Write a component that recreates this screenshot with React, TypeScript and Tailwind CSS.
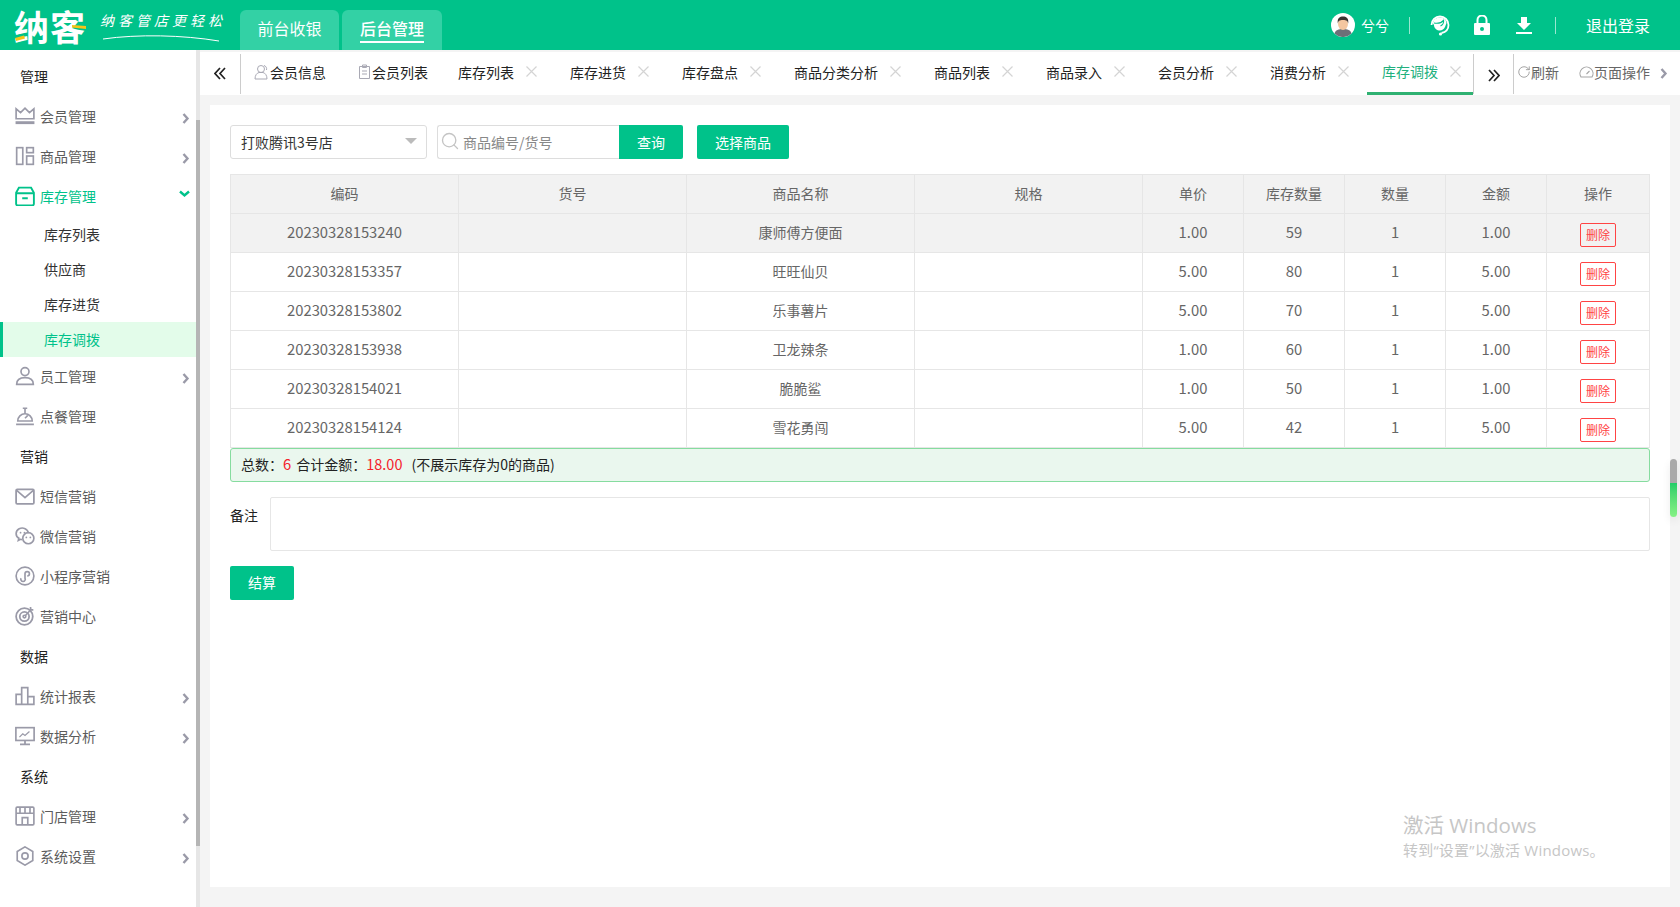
import { RotateCw, Search } from 'lucide-react';
import type { ReactNode } from 'react';

const GREEN = 'text-[#00c28a]';

function Ico({ children, className = 'text-[#9a9aa8]' }: { children: ReactNode; className?: string }) {
  return (
    <svg viewBox="0 0 18 18" fill="none" stroke="currentColor" strokeWidth="1.500" className={`w-5 h-5 shrink-0 ${className}`}>
      {children}
    </svg>
  );
}

function ArrowRight() {
  return (
    <svg viewBox="0 0 8 11" fill="none" stroke="#9a9aa8" strokeWidth="2.400" className="w-2 h-[11px] shrink-0">
      <path d="M1.500 1l4 4.500-4 4.500" />
    </svg>
  );
}

function DoubleArrow({ flip = false }: { flip?: boolean }) {
  return (
    <svg viewBox="0 0 12 13" fill="none" stroke="#222" strokeWidth="1.700" className={`w-3 h-[13px] ${flip ? 'rotate-180' : ''}`}>
      <path d="M6 1L1 6.500 6 12M11 1L6 6.500 11 12" />
    </svg>
  );
}

const icons: Record<string, ReactNode> = {
  crown: (
    <>
      <path d="M1 11.500V2.500l4 3.500 4-4 4 4 4-3.500v9z" />
      <path d="M0.500 15h17" strokeWidth="2.600" />
    </>
  ),
  goods: (
    <>
      <rect x="1.500" y="1.500" width="5.500" height="15" />
      <rect x="10.500" y="1.500" width="6" height="4.500" />
      <rect x="10.500" y="9" width="6" height="7.500" />
    </>
  ),
  box: (
    <>
      <path d="M3.500 1.500h11l2.500 4.500v10a1.500 1.500 0 0 1-1.500 1.500h-13A1.500 1.500 0 0 1 1 16V6z" strokeWidth="1.700" />
      <path d="M1 6.500h16M6.500 11h5" strokeWidth="1.700" />
    </>
  ),
  user: (
    <>
      <circle cx="9" cy="5" r="3.600" />
      <path d="M1.500 16.500c0-4 3.200-6 7.500-6s7.500 2 7.500 6z" />
    </>
  ),
  bell: (
    <>
      <path d="M2.500 13.500a6.500 6.500 0 0 1 13 0z" />
      <path d="M1 16.500h16M7 2h4M9 2v5M9 11l2.500-2.500" />
    </>
  ),
  mail: (
    <>
      <rect x="1" y="3" width="16" height="13" rx="1" strokeWidth="1.600" />
      <path d="M1.500 4l7.500 6.500L16.500 4" />
    </>
  ),
  wechat: (
    <>
      <path d="M12 6.500A5.500 5 0 1 0 3.500 11l-.5 2 2-1c.5.200 1 .3 1.500.300" />
      <circle cx="12" cy="11" r="5" />
      <path d="M10.200 10.300h.01M13.800 10.300h.01M5 6h.01M8.500 6h.01" strokeWidth="1.600" strokeLinecap="round" />
    </>
  ),
  mini: (
    <>
      <circle cx="9" cy="9" r="8" />
      <path d="M5.500 11a2 2 0 1 0 3.500 0V7a2 2 0 1 1 2 2" />
    </>
  ),
  target: (
    <>
      <circle cx="8.500" cy="9.500" r="7.500" strokeWidth="1.600" />
      <circle cx="8.500" cy="9.500" r="4.200" strokeWidth="1.600" />
      <circle cx="8.500" cy="9.500" r="1.200" />
      <path d="M9 9l6-6.500M14 1v2.500h2.500" />
    </>
  ),
  bars: <path d="M1 16.500V7.500h5v9zM6 16.500V1.500h5.500v15zM11.500 16.500V9.500H17v7z" />,
  monitor: (
    <>
      <rect x="0.800" y="1.500" width="16.400" height="11.500" />
      <path d="M9 13v3.500M4.500 16.500h9" strokeWidth="1.600" />
      <path d="M4 10l3-3 2 1.500 4-3.500" strokeWidth="1.100" />
    </>
  ),
  store: (
    <>
      <path d="M2 1h14a1 1 0 0 1 1 1v14a1 1 0 0 1-1 1H2a1 1 0 0 1-1-1V2a1 1 0 0 1 1-1z" />
      <path d="M1 6.500h16M4.500 1v5.500M9 1v5.500M13.500 1v5.500M6.500 17v-6.500h5V17" />
    </>
  ),
  gear: (
    <>
      <path d="M9 0.800l7 4.100v8.200l-7 4.100-7-4.100V4.900z" />
      <circle cx="9" cy="9" r="2.800" />
    </>
  ),
};

type NavEntry =
  | { kind: 'head'; label: string }
  | { kind: 'item'; label: string; icon: string; arrow?: boolean; open?: boolean }
  | { kind: 'sub'; label: string; active?: boolean };

const nav: NavEntry[] = [
  { kind: 'head', label: '管理' },
  { kind: 'item', label: '会员管理', icon: 'crown', arrow: true },
  { kind: 'item', label: '商品管理', icon: 'goods', arrow: true },
  { kind: 'item', label: '库存管理', icon: 'box', arrow: true, open: true },
  { kind: 'sub', label: '库存列表' },
  { kind: 'sub', label: '供应商' },
  { kind: 'sub', label: '库存进货' },
  { kind: 'sub', label: '库存调拨', active: true },
  { kind: 'item', label: '员工管理', icon: 'user', arrow: true },
  { kind: 'item', label: '点餐管理', icon: 'bell' },
  { kind: 'head', label: '营销' },
  { kind: 'item', label: '短信营销', icon: 'mail' },
  { kind: 'item', label: '微信营销', icon: 'wechat' },
  { kind: 'item', label: '小程序营销', icon: 'mini' },
  { kind: 'item', label: '营销中心', icon: 'target' },
  { kind: 'head', label: '数据' },
  { kind: 'item', label: '统计报表', icon: 'bars', arrow: true },
  { kind: 'item', label: '数据分析', icon: 'monitor', arrow: true },
  { kind: 'head', label: '系统' },
  { kind: 'item', label: '门店管理', icon: 'store', arrow: true },
  { kind: 'item', label: '系统设置', icon: 'gear', arrow: true },
];

const tabs = ['库存列表', '库存进货', '库存盘点', '商品分类分析', '商品列表', '商品录入', '会员分析', '消费分析'];

const rows = [
  ['20230328153240', '康师傅方便面', '1.00', '59', '1', '1.00'],
  ['20230328153357', '旺旺仙贝', '5.00', '80', '1', '5.00'],
  ['20230328153802', '乐事薯片', '5.00', '70', '1', '5.00'],
  ['20230328153938', '卫龙辣条', '1.00', '60', '1', '1.00'],
  ['20230328154021', '脆脆鲨', '1.00', '50', '1', '1.00'],
  ['20230328154124', '雪花勇闯', '5.00', '42', '1', '5.00'],
];

function CloseX() {
  return (
    <svg viewBox="0 0 11 11" stroke="#d4d4d4" strokeWidth="1.200" className="w-[11px] h-[11px] ml-3 shrink-0">
      <path d="M0.500 0.500l10 10M10.500 0.500l-10 10" />
    </svg>
  );
}

function Sidebar() {
  return (
    <aside className="w-[200px] flex shrink-0">
      <div className="w-[196px] bg-white pt-[7px] text-sm">
        {nav.map((n) => {
          if (n.kind === 'head') {
            return (
              <div key={n.label} className="h-10 pl-5 pb-0.5 flex items-center text-[#222]">
                {n.label}
              </div>
            );
          }
          if (n.kind === 'sub') {
            return (
              <div
                key={n.label}
                className={
                  n.active
                    ? 'h-[35px] pl-[41px] pb-0.5 flex items-center bg-[#e3fcea] border-l-[3px] border-[#00c28a] text-[#00c28a]'
                    : 'h-[35px] pl-11 pb-0.5 flex items-center text-[#333]'
                }
              >
                {n.label}
              </div>
            );
          }
          return (
            <div key={n.label} className={`h-10 pl-[15px] pr-[6px] pb-0.5 flex items-center ${n.open ? GREEN : 'text-[#5c5c5c]'}`}>
              <Ico className={n.open ? GREEN : 'text-[#9a9aa8]'}>{icons[n.icon]}</Ico>
              <span className="ml-[5px] flex-1">{n.label}</span>
              {n.open ? (
                <svg viewBox="0 0 11 8" fill="none" stroke="#00c28a" strokeWidth="2.400" className="w-[11px] h-2 -mt-1 -ml-[3px]">
                  <path d="M1 1.500l4.500 4 4.500-4" />
                </svg>
              ) : n.arrow ? (
                <span className="mt-1">
                  <ArrowRight />
                </span>
              ) : null}
            </div>
          );
        })}
      </div>
      <div className="w-1 flex flex-col bg-[#e6e6e6]">
        <div className="h-[70px]" />
        <div className="h-[726px] bg-[#b5b5b5]" />
      </div>
    </aside>
  );
}

function TabBar() {
  return (
    <div className="h-[43px] mt-0.5 bg-white flex items-center text-sm text-[#222]">
      <div className="w-[41px] h-10 border-r border-[#ccc] flex items-center justify-center pr-px">
        <DoubleArrow />
      </div>
      <div className="h-full flex items-center ml-[3px] pl-2.5 pr-[15px] mr-1.5 pb-1">
        <svg viewBox="0 0 16 16" fill="none" stroke="#a9a9b4" strokeWidth="1" className="w-4 h-4 shrink-0">
          <circle cx="7" cy="5" r="3.500" />
          <path d="M1 15c0-4 2-6 4-6.500h4c2 .5 4 2.500 4 6.500zM10 1.500c2 .5 3 2.500 2.500 4.500" />
        </svg>
        会员信息
      </div>
      <div className="h-full flex items-center pl-2.5 pr-[9px] mr-1.5 pb-1">
        <svg viewBox="0 0 15 16" fill="none" stroke="#a9a9b4" strokeWidth="1" className="w-[15px] h-4 shrink-0">
          <path d="M2.500 2.500h10v12h-10zM5.500 1h4v2.500h-4zM5 7h5M5 10h5" />
        </svg>
        会员列表
      </div>
      {tabs.map((t) => (
        <div key={t} className="h-full flex items-center pl-[15px] pr-3 mr-1.5 pb-1">
          {t}
          <CloseX />
        </div>
      ))}
      <div className="h-full flex items-center pl-[15px] pr-3 pb-0.5 text-[#22b07d] border-b-[3px] border-[#2fb172]">
        库存调拨
        <CloseX />
      </div>
      <div className="w-[41px] h-10 border-x border-[#ccc] flex items-center justify-center">
        <div className="mt-1">
          <DoubleArrow flip />
        </div>
      </div>
      <div className="flex items-center text-[#666] ml-[3px] pb-1">
        <RotateCw size={14} strokeWidth={1.300} className="text-[#888]" />
        <span>刷新</span>
        <svg viewBox="0 0 15 15" fill="none" stroke="#a5a5a5" strokeWidth="1.100" className="w-[15px] h-[15px] ml-5">
          <path d="M2 13h11a6.500 6.500 0 1 0-11 0zM7.500 10l3-3" />
        </svg>
        <span>页面操作</span>
        <span className="ml-2.5 mt-1">
          <ArrowRight />
        </span>
      </div>
    </div>
  );
}

function Toolbar() {
  return (
    <div className="flex h-[34px] text-sm">
      <div className="w-[197px] border border-[#ddd] rounded-[3px] pl-2.5 pr-[9px] flex items-center justify-between text-[#333]">
        打败腾讯3号店
        <span className="w-0 h-0 border-x-[6px] border-t-[6px] border-x-transparent border-t-[#bbb] -mt-0.5" />
      </div>
      <div className="ml-2.5 w-[182px] border border-[#ddd] border-r-0 rounded-l-[3px] pl-[2px] flex items-center text-[#888]">
        <Search size={20} strokeWidth={1.600} className="text-[#c4c4c4] mr-[3px] -mt-0.5" />
        商品编号/货号
      </div>
      <button className="w-16 bg-[#00c28a] text-white rounded-r-[2px]">查询</button>
      <button className="ml-3.5 w-[92px] bg-[#00c28a] text-white rounded-[2px]">选择商品</button>
    </div>
  );
}

function GoodsTable() {
  const heads = ['编码', '货号', '商品名称', '规格', '单价', '库存数量', '数量', '金额', '操作'];
  const widths = ['w-[228px]', 'w-[228px]', 'w-[228px]', 'w-[228px]', 'w-[101px]', 'w-[101px]', 'w-[101px]', 'w-[101px]', ''];
  return (
    <table className="w-full table-fixed border-collapse mt-[15px] text-sm text-[#666]">
      <colgroup>
        {widths.map((w, i) => (
          <col key={i} className={w} />
        ))}
      </colgroup>
      <thead>
        <tr className="bg-[#f2f2f2]">
          {heads.map((h) => (
            <th key={h} className="h-[39px] pb-0.5 font-normal border border-[#e6e6e6]">
              {h}
            </th>
          ))}
        </tr>
      </thead>
      <tbody>
        {rows.map((r, i) => (
          <tr key={r[0]} className={i === 0 ? 'bg-[#f2f2f2]' : ''}>
            <td className="h-[39px] pb-0.5 border border-[#e6e6e6] text-center text-[14.800px]">{r[0]}</td>
            <td className="border border-[#e6e6e6]" />
            <td className="pb-0.5 border border-[#e6e6e6] text-center">{r[1]}</td>
            <td className="border border-[#e6e6e6]" />
            <td className="pb-0.5 border border-[#e6e6e6] text-center text-[14.800px]">{r[2]}</td>
            <td className="pb-0.5 border border-[#e6e6e6] text-center text-[14.800px]">{r[3]}</td>
            <td className="pb-0.5 border border-[#e6e6e6] text-center text-[14.800px]">{r[4]}</td>
            <td className="pb-0.5 border border-[#e6e6e6] text-center text-[14.800px]">{r[5]}</td>
            <td className="border border-[#e6e6e6] text-center">
              <button className="w-9 h-6 mt-[3px] border border-[#f44] rounded-[2px] text-xs text-[#f44] leading-none align-middle">删除</button>
            </td>
          </tr>
        ))}
      </tbody>
    </table>
  );
}

export default function App() {
  return (
    <div className="w-[1680px] h-[907px] relative overflow-hidden bg-[#f4f4f4] font-['Noto_Sans_CJK_SC','Liberation_Sans',sans-serif]">
      <header className="h-[50px] bg-[#00c28a] flex text-white">
        <div className="w-[240px] relative">
          <span className="absolute left-[14px] top-[6px] text-[35px] leading-[40px] font-bold tracking-[1px]">纳客</span>
          <svg viewBox="0 0 72 28" className="absolute left-[15px] top-[13px] w-[72px] h-[28px]" fill="#f5c518">
            <path d="M0 25l9-2.500 1 3-9 2.500zM57 12l14 1v3l-14-1.500z" />
          </svg>
          <span className="absolute left-[100px] top-[10px] text-sm leading-5 italic tracking-[4px] whitespace-nowrap">纳客管店更轻松</span>
          <svg viewBox="0 0 116 8" fill="none" stroke="#fff" className="absolute left-[103px] top-[34px] w-[116px] h-2">
            <path d="M0 5C35 0 80 1 116 7" strokeWidth="1" />
          </svg>
        </div>
        <div className="flex items-end gap-[3px]">
          <div className="w-[99px] h-10 rounded-t-md bg-[#33d1a5] flex items-center justify-center text-base pb-1">前台收银</div>
          <div className="w-[100px] h-10 rounded-t-md bg-[#33d1a5] flex items-center justify-center text-base pb-0.5">
            <span className="border-b-2 border-white leading-[26px] font-medium">后台管理</span>
          </div>
        </div>
        <div className="ml-auto flex items-center pr-[30px]">
          <svg viewBox="0 0 24 24" className="w-6 h-6">
            <circle cx="12" cy="12" r="12" fill="#fff" />
            <path d="M3.500 20.500c1-3.500 4-4.500 8.500-4.500s7.500 1 8.500 4.500A12 12 0 0 1 3.500 20.500z" fill="#6c7078" />
            <ellipse cx="12" cy="11" rx="5" ry="6" fill="#f4c6a0" />
            <path d="M6.800 10.500C6 5 9 3.500 12 3.500s6 1.500 5.200 7c-.5-2.500-1.500-3.500-5.200-3.500s-4.700 1-5.200 3.500z" fill="#3a3330" />
          </svg>
          <span className="ml-1.5 text-sm">兮兮</span>
          <span className="ml-5 w-px h-[17px] bg-white/60" />
          <svg viewBox="0 0 20 22" fill="none" stroke="#fff" className="ml-5 w-5 h-[22px]">
            <path d="M1.500 11a8.500 8.500 0 0 1 17 0c0 4-2.500 7-7 8" strokeWidth="1.800" />
            <path d="M3 9.500C3 6 6 3.500 10 3.500s6.500 2.500 6.500 5.500L15 13c-1 2-3 3.500-5 3.500-3 0-6-2-6-5.500z" fill="#fff" stroke="none" />
            <path d="M4 9c3 .5 7 .5 9.500-2.500.5 2-1 4.500-3 5.500" stroke="#00c28a" strokeWidth="1.200" />
            <circle cx="10.500" cy="20" r="1.600" fill="#fff" stroke="none" />
          </svg>
          <svg viewBox="0 0 16 20" className="ml-6 w-4 h-5">
            <path d="M3.500 9V5a4.500 4.500 0 0 1 9 0v4" fill="none" stroke="#fff" strokeWidth="2" />
            <path d="M1 8h14a1 1 0 0 1 1 1v10a1 1 0 0 1-1 1H1a1 1 0 0 1-1-1V9a1 1 0 0 1 1-1z" fill="#fff" />
            <circle cx="8" cy="14" r="2" fill="#00c28a" />
          </svg>
          <svg viewBox="0 0 16 17" className="ml-[26px] w-4 h-[17px]" fill="#fff">
            <path d="M5 0h6v6h4L8 13 1 6h4zM0 15h16v2H0z" />
          </svg>
          <span className="ml-[23px] w-px h-[17px] bg-white/60" />
          <span className="ml-[30px] text-base">退出登录</span>
        </div>
      </header>

      <div className="flex h-[857px]">
        <Sidebar />
        <main className="flex-1 min-w-0">
          <TabBar />
          <section className="mt-2.5 ml-2.5 mr-2.5 h-[782px] bg-white px-5 pt-5">
            <Toolbar />
            <GoodsTable />
            <div className="h-[34px] flex items-center border border-[#86dc9f] rounded-[3px] bg-[#eaf7ee] pl-2.5 pb-0.5 text-sm text-[#222]">
              总数：<span className="text-[#f5222d] text-[14.800px]">6</span>
              <span className="ml-[5px]">合计金额：</span>
              <span className="text-[#f5222d] text-[14.500px]">18.00</span>
              <span className="ml-[9px]">(不展示库存为0的商品)</span>
            </div>
            <div className="flex mt-[15px]">
              <label className="w-10 pt-[8px] text-sm text-[#222]">备注</label>
              <textarea className="flex-1 h-[54px] border border-[#e6e6e6] rounded-[2px] resize-none" />
            </div>
            <button className="mt-[15px] w-16 h-[34px] pb-0.5 bg-[#00c28a] text-white text-sm rounded-[2px]">结算</button>
          </section>
        </main>
      </div>

      <div className="absolute left-[1670px] top-[459px] w-[7px] h-[58px] rounded-full overflow-hidden flex flex-col shadow-[0_4px_8px_rgba(0,0,0,0.08)]">
        <div className="h-6 bg-[#a9a9a9]" />
        <div className="flex-1 bg-gradient-to-b from-[#1fce68] to-[#85f285]" />
      </div>

      <div className="absolute left-[1403px] top-[810px] text-[#c6c6c6] pointer-events-none font-['Open_Sans','Noto_Sans_CJK_SC',sans-serif]">
        <div className="text-[20.500px] leading-[30px]">激活 Windows</div>
        <div className="text-[15px] tracking-[0.2px] leading-[20px] whitespace-nowrap">转到“设置”以激活 Windows。</div>
      </div>
    </div>
  );
}
